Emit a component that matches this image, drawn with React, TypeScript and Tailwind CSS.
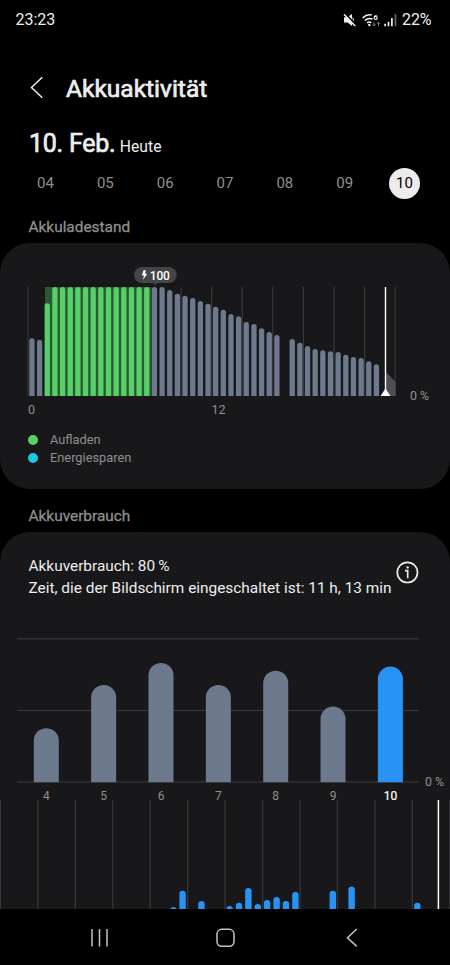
import { clsx } from 'clsx';

const DAYS = ['04', '05', '06', '07', '08', '09', '10'];

// battery level per half hour: y of the bar's top inside the chart, null = no data
const LEVEL_TOPS: (number | null)[] = [
  51.3, 52.7, 16.3, 0, 0, 0, 0, 0, 0, 0, 0, 0, 0, 0, 0, 0, 0, 0, 3, 6.7, 8.7, 11, 14, 16.7, 19.7, 22.7, 27, 29.3, 35,
  37, 41.3, 45, 48, null, 52, 55.7, 59, 62, 63.3, 64.3, 65, 67.7, 70, 71, 74.3, 77.3,
];
const CHARGE_FROM = 2;
const CHARGE_TO = 15;

const USAGE = [
  { day: '4', height: 54 },
  { day: '5', height: 97.3 },
  { day: '6', height: 119.3 },
  { day: '7', height: 97.3 },
  { day: '8', height: 111.5 },
  { day: '9', height: 75.7 },
  { day: '10', height: 115.6 },
];

const HOURLY = [
  [173.4, 2],
  [182.6, 18.3],
  [201.5, 8],
  [229.6, 3],
  [239, 6.3],
  [248.4, 21],
  [257.8, 5],
  [267.1, 9],
  [276.6, 12],
  [286, 8],
  [295.4, 17],
  [332.8, 18.3],
  [351.6, 22.5],
  [417.3, 6.3],
];

function barPath(x: number, y: number, w: number, bottom: number) {
  const r = w / 2;
  return `M${x} ${bottom}V${y + r}a${r} ${r} 0 0 1 ${w} 0V${bottom}z`;
}

function StatusBar() {
  return (
    <div className="flex h-10 items-center justify-between pr-[18px] pl-[15.5px] text-[16px] text-[#eeeeee]">
      <span>23:23</span>
      <div className="flex items-center">
        <svg width="54" height="16" viewBox="0 0 54 16" className="mr-[5px]" fill="none">
          <path d="M1 5.2h3.6L9 2v12l-4.4-3.4H1z" fill="#eee" />
          <path d="M9.6 5q2.6 2.9 0 5.8z" fill="#eee" />
          <path d="M2.2 1.6l10.6 11" stroke="#000" strokeWidth="1.6" />
          <path d="M1 2.2l11.2 11.8" stroke="#eee" strokeWidth="1.5" />
          <path d="M19.6 5.9q4.4-4.1 9.2-2.9M21.8 8.4q3.8-3.2 7.8-1.2M24.1 10.8q2.1-1.7 4.2 0" stroke="#eee" strokeWidth="1.5" />
          <circle cx="26.3" cy="13" r="1.2" fill="#eee" />
          <text x="30.2" y="8.4" fontSize="8" fontWeight="700" fill="#eee">
            6
          </text>
          <path d="M31 9.8v4m-1.5-1.5l1.5 1.7 1.5-1.7M35.5 14.3v-4m-1.5 1.5l1.5-1.7 1.5 1.7" stroke="#777" />
          <path d="M42.1 14.3v-2.5M45.5 14.3V9.8M48.9 14.3V6" stroke="#eee" strokeWidth="1.7" />
          <path d="M52.5 14.3V2.2" stroke="#666" strokeWidth="1.7" />
        </svg>
        <span className="w-[30px] tracking-[-0.1px]">22%</span>
      </div>
    </div>
  );
}

function DayPicker() {
  return (
    <div className="flex h-[31px] items-center justify-between pr-[30px] pl-[30px] text-[15px] text-[#8f8f8f]">
      {DAYS.map((d) => (
        <button
          key={d}
          className={clsx(
            'flex size-[31px] items-center justify-center rounded-full',
            d === '10' && 'bg-[#ececec] text-black',
          )}
        >
          {d}
        </button>
      ))}
    </div>
  );
}

function LevelChart() {
  return (
    <div className="flex h-[130px] items-start">
      <svg width="400" height="130" viewBox="0 -21 400 130">
        {Array.from({ length: 13 }, (_, i) => (
          <rect key={i} x={27.4 + i * 30.6} y="0" width="1.2" height="109" fill="#38383a" />
        ))}
        <rect x="45" y="0" width="106.5" height="109" fill="#2b5735" />
        {LEVEL_TOPS.map(
          (top, i) =>
            top !== null && (
              <path
                key={i}
                d={barPath(29.3 + i * 7.655, top, 5.3, 109)}
                fill={i >= CHARGE_FROM && i <= CHARGE_TO ? '#58d068' : '#6d798d'}
              />
            ),
        )}
        <path d="M386 85l9.6 10v14H386z" fill="#4d4f53" />
        <path d="M385.5 0v109" stroke="#fff" strokeWidth="1.4" />
        <path d="M385.5 101.5l5 7.5h-10z" fill="#fff" />
        <path d="M152.5-4.8h6l-3 3z" fill="#454547" />
        <rect x="134" y="-20" width="42.7" height="16" rx="8" fill="#454547" />
        <path d="M145.9-16.8h-2.4l-1.6 5.2h2.2l-1.2 4.7 4.4-6.4h-2.3z" fill="#fff" />
        <text x="149.8" y="-7.4" fontSize="12" fontWeight="500" fill="#fff" textLength="20">
          100
        </text>
      </svg>
      <span className="mt-[121px] ml-[10px] text-[12.3px] whitespace-nowrap text-[#8f8f8f]">0 %</span>
    </div>
  );
}

function UsageChart() {
  return (
    <div className="flex h-[162px] items-start">
      <svg width="421" height="162" viewBox="0 0 421 162" className="overflow-visible">
        {[0.8, 72.5, 144].map((y) => (
          <rect key={y} x="17.5" y={y - 0.6} width="401.5" height="1.2" fill="#38383a" />
        ))}
        {USAGE.map(({ day, height }, i) => {
          const cx = 46.3 + i * 57.35;
          const active = day === '10';
          return (
            <g key={day}>
              <path d={barPath(cx - 12.5, 144.2 - height, 25, 144.2)} fill={active ? '#2794f5' : '#6d798d'} />
              <text
                x={cx}
                y="161.8"
                fontSize="12"
                textAnchor="middle"
                fill={active ? '#fff' : '#8f8f8f'}
                stroke={active ? '#fff' : 'none'}
                strokeWidth="0.2"
              >
                {day}
              </text>
            </g>
          );
        })}
      </svg>
      <span className="mt-[135px] ml-[4px] text-[12.3px] leading-[18px] whitespace-nowrap text-[#8f8f8f]">0 %</span>
    </div>
  );
}

function HourlyChart() {
  return (
    <svg width="450" height="109" viewBox="0 0 450 109" className="block">
      {Array.from({ length: 13 }, (_, i) => (
        <rect key={i} x={-0.2 + i * 37.45} y="0" width="1.2" height="109" fill="#38383a" />
      ))}
      {HOURLY.map(([x, h]) => (
        <path key={x} d={barPath(x - 3.2, 109 - h, 6.4, 116)} fill="#2794f5" />
      ))}
      <path d="M438.4 0v109" stroke="#fff" strokeWidth="1.5" />
    </svg>
  );
}

function NavBar() {
  return (
    <nav className="flex h-14 bg-black">
      <svg width="450" height="56" viewBox="0 0 450 56" fill="none" stroke="#c4c4c4" strokeWidth="1.5">
        <path d="M92 20v17.5M99.5 20v17.5M107 20v17.5" />
        <rect x="217" y="20.3" width="17" height="17" rx="4.8" />
        <path d="M356.7 20l-9.2 8.7 9.2 8.7" />
      </svg>
    </nav>
  );
}

export default function App() {
  return (
    <main className="flex h-[965px] w-[450px] flex-col overflow-hidden bg-black font-['Roboto',sans-serif] text-[#eeeeee]">
      <StatusBar />
      <header className="mt-[28px] flex h-10 items-center">
        <svg width="14" height="24" viewBox="0 0 14 24" className="ml-[30px]" fill="none">
          <path d="M12.3 1.2L1.5 11.5l10.8 10.3" stroke="#eee" strokeWidth="1.5" />
        </svg>
        <h1 className="mt-[2px] ml-[22px] text-[24.5px] [-webkit-text-stroke:0.7px_#eee]">Akkuaktivität</h1>
      </header>
      <div className="mt-[17px] flex h-[38px] items-baseline pl-[29px]">
        <span className="text-[25px] leading-[38px] tracking-[-0.25px] [-webkit-text-stroke:0.7px_#eee]">10. Feb.</span>
        <span className="ml-[4.5px] text-[15.7px]">Heute</span>
      </div>
      <div className="mt-[5px]">
        <DayPicker />
      </div>
      <h2 className="mt-[17px] pl-[28.5px] text-[15.4px] leading-[22px] text-[#8f8f8f] [-webkit-text-stroke:0.3px_#8f8f8f]">
        Akkuladestand
      </h2>
      <section className="mt-[5px] h-[246px] rounded-[30px] bg-[#18181a] pt-[23px]">
        <LevelChart />
        <div className="flex h-[26px] items-center pt-[3px] pl-[28px] text-[12.5px] text-[#8f8f8f]">
          <span className="w-[183.5px]">0</span>
          <span>12</span>
        </div>
        <ul className="mt-[9px] pl-[28px] text-[12.8px] leading-[18px] text-[#8f8f8f]">
          <li className="flex items-center gap-[12px]">
            <span className="size-[10px] rounded-full bg-[#58d068]" />
            Aufladen
          </li>
          <li className="flex items-center gap-[12px]">
            <span className="size-[10px] rounded-full bg-[#1cc8e0]" />
            Energiesparen
          </li>
        </ul>
      </section>
      <h2 className="mt-[16px] pl-[28.5px] text-[15.4px] leading-[22px] text-[#8f8f8f] [-webkit-text-stroke:0.3px_#8f8f8f]">
        Akkuverbrauch
      </h2>
      <section className="mt-[5px] h-[377px] shrink-0 overflow-hidden rounded-t-[30px] bg-[#18181a]">
        <div className="flex h-[106px] pt-[24px] pl-[28.5px] text-[15.4px] leading-[21.5px]">
          <p className="w-[367.5px] whitespace-nowrap">
            Akkuverbrauch: 80&#8201;%
            <br />
            Zeit, die der Bildschirm eingeschaltet ist: 11 h, 13 min
          </p>
          <svg width="23" height="23" viewBox="0 0 23 23" className="mt-[5px]" fill="none" stroke="#eee">
            <circle cx="11.4" cy="11.4" r="10.1" strokeWidth="1.7" />
            <path d="M9 9.6h2.7v7.6" strokeWidth="1.6" />
            <circle cx="11.6" cy="6.4" r="1.2" fill="#eee" stroke="none" />
          </svg>
        </div>
        <UsageChart />
        <HourlyChart />
      </section>
      <NavBar />
    </main>
  );
}
